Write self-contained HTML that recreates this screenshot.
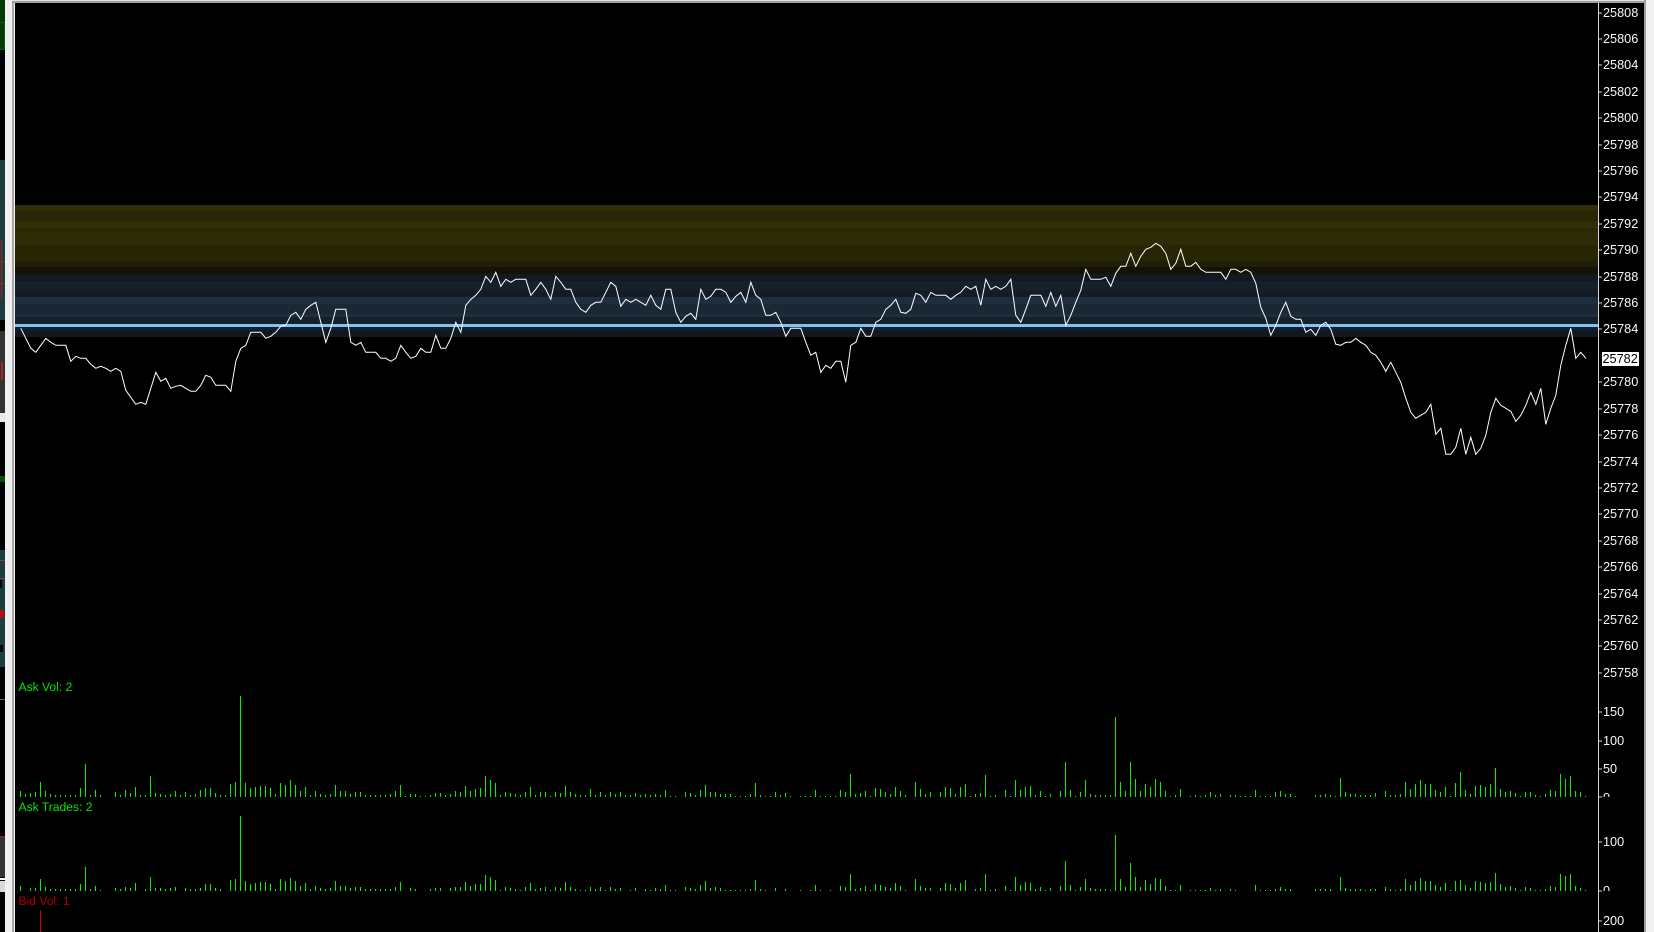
<!DOCTYPE html>
<html><head><meta charset="utf-8"><title>Chart</title>
<style>
html,body{margin:0;padding:0;background:#000;width:1654px;height:932px;overflow:hidden}
svg{display:block;position:absolute;left:0;top:0}
text{font-family:"Liberation Sans",Arial,sans-serif;font-size:12.7px}
text.l{font-size:12.1px}
</style></head><body>
<svg width="1654" height="932" viewBox="0 0 1654 932" xmlns="http://www.w3.org/2000/svg">
<rect width="1654" height="932" fill="#000"/>
<!-- left strip -->
<g shape-rendering="crispEdges">
<rect x="0" y="0" width="5" height="22" fill="#063a06"/>
<rect x="0" y="22" width="5" height="28" fill="#0a5a0a"/>
<rect x="0" y="23" width="4" height="26" fill="#063a06"/>
<rect x="0" y="160" width="5" height="160" fill="#1c3c3e"/>
<rect x="1" y="240" width="1" height="58" fill="#a02020"/>
<rect x="0" y="261" width="5" height="1" fill="#a02020"/>
<rect x="0" y="283" width="5" height="1" fill="#a02020"/>
<rect x="0" y="331" width="5" height="82" fill="#333"/>
<rect x="1" y="362" width="2" height="18" fill="#a02828"/>
<rect x="0" y="413" width="5" height="9" fill="#e8e8e8"/>
<rect x="0" y="476" width="5" height="6" fill="#0a4a0a"/>
<rect x="0" y="550" width="5" height="117" fill="#1c3c3e"/>
<rect x="0" y="560" width="5" height="1" fill="#804040"/>
<rect x="0" y="578" width="5" height="1" fill="#804040"/>
<rect x="0" y="580" width="2" height="8" fill="#000"/>
<rect x="0" y="610" width="4" height="8" fill="#b01010"/>
<rect x="0" y="645" width="3" height="7" fill="#000"/>
<rect x="0" y="699" width="5" height="1" fill="#666"/>
<rect x="0" y="836" width="5" height="2" fill="#802020"/>
<rect x="0" y="838" width="5" height="39" fill="#333"/>
<rect x="0" y="878" width="5" height="2" fill="#fff"/>
<rect x="0" y="881" width="5" height="11" fill="#d8d8d8"/>
<rect x="5" y="0" width="7" height="932" fill="#f0f0f0"/>
<rect x="12" y="0" width="2" height="932" fill="#a8a8a8"/>
<rect x="14" y="0" width="1" height="932" fill="#f0f0f0"/>
<rect x="12" y="0" width="1642" height="1" fill="#e0e0e0"/>
<rect x="12" y="1" width="1642" height="2" fill="#a0a0a0"/>
<rect x="1644" y="0" width="2" height="932" fill="#a0a0a0"/>
<rect x="1646" y="0" width="8" height="932" fill="#f0f0f0"/>
<!-- bands -->
<rect x="15" y="205" width="1583" height="6" fill="#312d04"/>
<rect x="15" y="211" width="1583" height="10" fill="#282604"/>
<rect x="15" y="221" width="1583" height="7" fill="#312d05"/>
<rect x="15" y="228" width="1583" height="4" fill="#2a2704"/>
<rect x="15" y="232" width="1583" height="9" fill="#2d2a05"/>
<rect x="15" y="241" width="1583" height="4" fill="#312c05"/>
<rect x="15" y="245" width="1583" height="16" fill="#282504"/>
<rect x="15" y="261" width="1583" height="6" fill="#201e04"/>
<rect x="15" y="267" width="1583" height="7" fill="#131204"/>
<rect x="15" y="274" width="1583" height="7" fill="#111a22"/>
<rect x="15" y="281" width="1583" height="10" fill="#15202a"/>
<rect x="15" y="291" width="1583" height="6" fill="#131c24"/>
<rect x="15" y="297" width="1583" height="7" fill="#1f2e3e"/>
<rect x="15" y="304" width="1583" height="10" fill="#1a2836"/>
<rect x="15" y="314" width="1583" height="3" fill="#1f2e3e"/>
<rect x="15" y="317" width="1583" height="7" fill="#15202a"/>
<rect x="15" y="324" width="1583" height="3" fill="#80c0ff"/>
<rect x="15" y="327" width="1583" height="3" fill="#15202a"/>
<rect x="15" y="330" width="1583" height="7" fill="#101920"/>
</g>
<!-- price line -->
<polyline transform="translate(.8 .3)" fill="none" stroke="#fff" stroke-width="1" points="20,328 25,338 30,348 35,352 40,345 45,338 50,342 55,345 60,345 65,345 70,361 75,356 80,358 85,358 90,364 95,368 100,366 105,368 110,371 115,368 120,371 125,390 130,397 135,404 140,402 145,404 150,388 155,372 160,381 165,378 170,388 175,386 180,385 185,388 190,391 195,391 200,385 205,375 210,377 215,385 220,385 225,385 230,391 235,361 240,348 245,345 250,332 255,332 260,332 265,338 270,336 275,332 280,326 285,325 290,315 295,312 300,319 305,309 310,305 315,302 320,322 325,342 330,328 335,309 340,309 345,309 350,342 355,345 360,342 365,352 370,352 375,352 380,358 385,358 390,361 395,358 400,345 405,352 410,358 415,356 420,348 425,352 430,352 435,335 440,348 445,348 450,338 455,322 460,332 465,305 470,299 475,295 480,289 485,276 490,282 495,272 500,286 505,279 510,282 515,279 520,279 525,279 530,295 535,289 540,282 545,289 550,299 555,276 560,282 565,289 570,289 575,302 580,309 585,312 590,305 595,302 600,302 605,292 610,282 615,286 620,306 625,299 630,302 635,299 640,302 645,305 650,295 655,305 660,309 665,289 670,289 675,312 680,322 685,316 690,313 695,319 700,289 705,299 710,296 715,289 720,289 725,292 730,302 735,296 740,292 745,302 750,282 755,295 760,299 765,315 770,315 775,312 780,322 785,336 790,328 795,328 800,328 805,342 810,355 815,352 820,372 825,365 830,368 835,361 840,361 845,382 850,345 855,342 860,328 865,336 870,336 875,322 880,319 885,309 890,305 895,299 900,312 905,313 910,309 915,293 920,295 925,302 930,292 935,295 940,295 945,295 950,299 955,295 960,292 965,286 970,289 975,286 980,305 985,279 990,289 995,286 1000,289 1005,286 1010,279 1015,315 1020,322 1025,309 1030,295 1035,295 1040,295 1045,306 1050,292 1055,306 1060,295 1065,325 1070,315 1075,302 1080,290 1085,269 1090,279 1095,279 1100,279 1105,277 1110,286 1115,273 1120,266 1125,266 1130,253 1135,266 1140,256 1145,249 1150,247 1155,243 1160,246 1165,253 1170,269 1175,263 1180,249 1185,266 1190,266 1195,262 1200,269 1205,272 1210,272 1215,272 1220,272 1225,279 1230,269 1235,269 1240,272 1245,269 1250,272 1255,283 1260,307 1265,318 1270,335 1275,325 1280,312 1285,302 1290,316 1295,319 1300,319 1305,332 1310,329 1315,335 1320,325 1325,322 1330,329 1335,344 1340,345 1345,342 1350,342 1355,338 1360,342 1365,345 1370,352 1375,355 1380,362 1385,371 1390,362 1395,372 1400,382 1405,398 1410,412 1415,418 1420,415 1425,412 1430,404 1435,434 1440,428 1445,454 1450,454 1455,447 1460,428 1465,454 1470,437 1475,454 1480,448 1485,435 1490,412 1495,398 1500,405 1505,408 1510,411 1515,421 1520,415 1525,405 1530,392 1535,404 1540,388 1545,424 1550,408 1555,395 1560,365 1565,345 1570,328 1575,358 1580,352 1585,358"/>
<!-- ask volume bars -->
<g transform="translate(.5 797)" stroke="#00f400" stroke-width="1" fill="none" shape-rendering="crispEdges">
<path d="M20 0v-6M25 0v-3M30 0v-4M35 0v-5M40 0v-15M45 0v-6M50 0v-3M55 0v-2M60 0v-2M65 0v-2M70 0v-2M75 0v-2M80 0v-9M85 0v-33M90 0v-2M95 0v-7M100 0v-2M115 0v-5M120 0v-2M125 0v-7M130 0v-4M135 0v-10M140 0v-2M145 0v-2M150 0v-21M155 0v-4M160 0v-3M165 0v-2M170 0v-3M175 0v-6M180 0v-2M185 0v-5M190 0v-2M195 0v-3M200 0v-7M205 0v-9M210 0v-9M215 0v-4M220 0v-2M225 0v-2M230 0v-13M235 0v-15M240 0v-101M245 0v-14M250 0v-9M255 0v-10M260 0v-11M265 0v-11M270 0v-9M275 0v-3M280 0v-14M285 0v-12M290 0v-17M295 0v-12M300 0v-6M305 0v-10M310 0v-2M315 0v-6M320 0v-3M325 0v-2M330 0v-3M335 0v-12M340 0v-6M345 0v-6M350 0v-3M355 0v-5M360 0v-5M365 0v-2M370 0v-2M375 0v-2M380 0v-2M385 0v-2M390 0v-3M395 0v-6M400 0v-12M405 0v-1M410 0v-3M415 0v-3M420 0v-1M425 0v-1M430 0v-2M435 0v-4M440 0v-4M445 0v-2M450 0v-3M455 0v-6M460 0v-5M465 0v-11M470 0v-6M475 0v-8M480 0v-9M485 0v-21M490 0v-17M495 0v-14M500 0v-2M505 0v-5M510 0v-4M515 0v-3M520 0v-2M525 0v-5M530 0v-10M535 0v-2M540 0v-5M545 0v-5M550 0v-1M555 0v-5M560 0v-4M565 0v-11M570 0v-5M575 0v-3M580 0v-2M585 0v-2M590 0v-8M595 0v-2M600 0v-5M605 0v-2M610 0v-5M615 0v-3M620 0v-5M625 0v-2M630 0v-2M635 0v-4M640 0v-2M645 0v-3M650 0v-2M655 0v-3M660 0v-2M665 0v-7M670 0v-1M675 0v-1M685 0v-5M690 0v-4M695 0v-2M700 0v-7M705 0v-12M710 0v-5M715 0v-5M720 0v-3M725 0v-3M730 0v-3M735 0v-1M740 0v-1M745 0v-1M750 0v-3M755 0v-14M760 0v-2M765 0v-1M770 0v-1M775 0v-5M780 0v-2M785 0v-4M790 0v-1M800 0v-1M805 0v-1M810 0v-1M815 0v-7M820 0v-1M825 0v-1M830 0v-1M835 0v-1M840 0v-7M845 0v-5M850 0v-23M855 0v-3M860 0v-4M865 0v-6M870 0v-1M875 0v-9M880 0v-8M885 0v-5M890 0v-3M895 0v-10M900 0v-6M905 0v-2M915 0v-15M920 0v-8M925 0v-3M930 0v-5M940 0v-5M945 0v-10M950 0v-9M955 0v-3M960 0v-10M965 0v-13M970 0v-1M975 0v-3M980 0v-4M985 0v-22M990 0v-1M995 0v-2M1005 0v-7M1010 0v-1M1015 0v-17M1020 0v-7M1025 0v-10M1030 0v-11M1035 0v-2M1040 0v-6M1045 0v-1M1050 0v-3M1060 0v-6M1065 0v-35M1070 0v-7M1075 0v-1M1080 0v-5M1085 0v-17M1090 0v-3M1095 0v-2M1100 0v-2M1105 0v-2M1110 0v-2M1115 0v-80M1120 0v-15M1125 0v-6M1130 0v-35M1135 0v-18M1140 0v-6M1145 0v-13M1150 0v-10M1155 0v-18M1160 0v-15M1165 0v-6M1170 0v-1M1175 0v-2M1180 0v-8M1190 0v-1M1195 0v-2M1200 0v-1M1205 0v-2M1210 0v-5M1215 0v-2M1220 0v-3M1230 0v-2M1235 0v-2M1240 0v-1M1245 0v-1M1250 0v-1M1255 0v-7M1260 0v-1M1265 0v-1M1270 0v-1M1275 0v-5M1280 0v-6M1285 0v-3M1290 0v-3M1295 0v-1M1315 0v-2M1320 0v-2M1325 0v-3M1330 0v-2M1335 0v-1M1340 0v-19M1345 0v-5M1350 0v-3M1355 0v-3M1360 0v-2M1365 0v-2M1370 0v-2M1375 0v-4M1385 0v-6M1390 0v-2M1395 0v-2M1400 0v-3M1405 0v-15M1410 0v-8M1415 0v-13M1420 0v-17M1425 0v-13M1430 0v-13M1435 0v-7M1440 0v-5M1445 0v-10M1450 0v-1M1455 0v-14M1460 0v-25M1465 0v-7M1470 0v-3M1475 0v-11M1480 0v-12M1485 0v-10M1490 0v-13M1495 0v-29M1500 0v-8M1505 0v-5M1510 0v-6M1515 0v-4M1520 0v-1M1525 0v-5M1530 0v-5M1535 0v-2M1540 0v-1M1545 0v-3M1550 0v-7M1555 0v-6M1560 0v-23M1565 0v-18M1570 0v-21M1575 0v-6M1580 0v-5M1585 0v-1"/>
</g>
<!-- ask trades bars -->
<g transform="translate(.5 891)" stroke="#00f400" stroke-width="1" fill="none" shape-rendering="crispEdges">
<path d="M20 0v-5M30 0v-3M35 0v-3M40 0v-12M45 0v-4M50 0v-2M55 0v-2M60 0v-2M65 0v-2M70 0v-2M75 0v-2M80 0v-7M85 0v-24M90 0v-2M95 0v-5M100 0v-1M115 0v-3M120 0v-2M125 0v-4M130 0v-3M135 0v-8M145 0v-2M150 0v-14M155 0v-3M160 0v-3M165 0v-2M170 0v-3M175 0v-4M185 0v-3M190 0v-2M195 0v-2M200 0v-3M205 0v-7M210 0v-7M215 0v-3M220 0v-2M230 0v-11M235 0v-12M240 0v-75M245 0v-10M250 0v-7M255 0v-8M260 0v-9M265 0v-9M270 0v-7M275 0v-2M280 0v-12M285 0v-10M290 0v-13M295 0v-10M300 0v-5M305 0v-8M310 0v-2M315 0v-5M320 0v-3M325 0v-2M330 0v-3M335 0v-10M340 0v-5M345 0v-5M350 0v-3M355 0v-4M360 0v-4M365 0v-2M370 0v-2M375 0v-2M380 0v-2M385 0v-2M390 0v-2M395 0v-4M400 0v-9M410 0v-3M415 0v-2M430 0v-2M435 0v-3M440 0v-3M450 0v-3M455 0v-4M460 0v-4M465 0v-9M470 0v-5M475 0v-7M480 0v-7M485 0v-16M490 0v-14M495 0v-11M500 0v-1M505 0v-4M510 0v-3M515 0v-2M520 0v-1M525 0v-4M530 0v-8M535 0v-2M540 0v-3M545 0v-4M550 0v-1M555 0v-4M560 0v-3M565 0v-9M570 0v-4M575 0v-2M580 0v-1M585 0v-1M590 0v-4M595 0v-2M600 0v-4M605 0v-1M610 0v-4M615 0v-2M620 0v-3M630 0v-1M635 0v-3M645 0v-2M650 0v-1M655 0v-3M660 0v-2M665 0v-6M670 0v-1M675 0v-1M685 0v-4M690 0v-3M695 0v-2M700 0v-6M705 0v-10M710 0v-3M715 0v-4M720 0v-3M725 0v-1M730 0v-1M735 0v-1M740 0v-1M745 0v-1M750 0v-2M755 0v-11M760 0v-2M765 0v-1M775 0v-3M785 0v-2M800 0v-1M810 0v-1M815 0v-6M820 0v-1M830 0v-1M840 0v-5M845 0v-4M850 0v-17M855 0v-2M860 0v-3M865 0v-5M870 0v-1M875 0v-7M880 0v-6M885 0v-4M890 0v-3M895 0v-8M900 0v-5M905 0v-1M915 0v-12M920 0v-5M925 0v-3M930 0v-3M940 0v-3M945 0v-8M950 0v-7M955 0v-3M960 0v-8M965 0v-11M975 0v-2M980 0v-3M985 0v-17M990 0v-1M995 0v-2M1005 0v-5M1010 0v-1M1015 0v-14M1020 0v-6M1025 0v-9M1030 0v-8M1035 0v-2M1040 0v-4M1045 0v-1M1050 0v-3M1060 0v-5M1065 0v-30M1070 0v-6M1075 0v-1M1080 0v-4M1085 0v-12M1090 0v-3M1095 0v-2M1100 0v-2M1105 0v-2M1110 0v-1M1115 0v-56M1120 0v-12M1125 0v-4M1130 0v-28M1135 0v-14M1140 0v-4M1145 0v-11M1150 0v-7M1155 0v-13M1160 0v-12M1165 0v-5M1170 0v-1M1175 0v-1M1180 0v-6M1190 0v-1M1195 0v-1M1200 0v-1M1205 0v-1M1210 0v-3M1215 0v-1M1220 0v-2M1230 0v-2M1235 0v-1M1255 0v-6M1260 0v-1M1265 0v-1M1270 0v-1M1275 0v-2M1280 0v-4M1285 0v-2M1290 0v-2M1315 0v-2M1320 0v-2M1325 0v-2M1330 0v-2M1340 0v-14M1345 0v-3M1350 0v-2M1355 0v-2M1360 0v-2M1365 0v-1M1370 0v-2M1375 0v-2M1385 0v-4M1390 0v-2M1395 0v-1M1400 0v-2M1405 0v-12M1410 0v-6M1415 0v-10M1420 0v-13M1425 0v-10M1430 0v-10M1435 0v-6M1440 0v-4M1445 0v-8M1450 0v-1M1455 0v-10M1460 0v-11M1465 0v-6M1470 0v-3M1475 0v-10M1480 0v-9M1485 0v-8M1490 0v-9M1495 0v-18M1500 0v-7M1505 0v-4M1510 0v-5M1515 0v-3M1520 0v-1M1525 0v-4M1530 0v-3M1535 0v-1M1540 0v-1M1545 0v-2M1550 0v-5M1555 0v-4M1560 0v-17M1565 0v-15M1570 0v-17M1575 0v-5M1580 0v-3M1585 0v-1"/>
</g>
<path d="M40.5 910V932" stroke="#d00000" stroke-width="1" shape-rendering="crispEdges"/>
<!-- indicator labels -->
<text class="l" x="18.5" y="691" fill="#00e800">Ask Vol: 2</text>
<text class="l" x="18.5" y="811" fill="#00e800">Ask Trades: 2</text>
<text class="l" x="18.5" y="905" fill="#b00000">Bid Vol: 1</text>
<!-- axis -->
<g shape-rendering="crispEdges" fill="none" stroke="#d8d8d8" stroke-width="1">
<path d="M1598.5 3V932"/>
<path d="M1599 13h3M1599 39h3M1599 65h3M1599 92h3M1599 118h3M1599 145h3M1599 171h3M1599 197h3M1599 224h3M1599 250h3M1599 277h3M1599 303h3M1599 329h3M1599 382h3M1599 409h3M1599 435h3M1599 462h3M1599 488h3M1599 514h3M1599 541h3M1599 567h3M1599 594h3M1599 620h3M1599 646h3M1599 673h3M1599 712h3M1599 741h3M1599 769h3M1599 797h3M1599 842h3M1599 891h3M1599 921h3"/>
</g>
<g fill="#f4f8ff">
<text x="1603" y="17">25808</text>
<text x="1603" y="43">25806</text>
<text x="1603" y="69">25804</text>
<text x="1603" y="96">25802</text>
<text x="1603" y="122">25800</text>
<text x="1603" y="149">25798</text>
<text x="1603" y="175">25796</text>
<text x="1603" y="201">25794</text>
<text x="1603" y="228">25792</text>
<text x="1603" y="254">25790</text>
<text x="1603" y="281">25788</text>
<text x="1603" y="307">25786</text>
<text x="1603" y="333">25784</text>
<text x="1603" y="386">25780</text>
<text x="1603" y="413">25778</text>
<text x="1603" y="439">25776</text>
<text x="1603" y="466">25774</text>
<text x="1603" y="492">25772</text>
<text x="1603" y="518">25770</text>
<text x="1603" y="545">25768</text>
<text x="1603" y="571">25766</text>
<text x="1603" y="598">25764</text>
<text x="1603" y="624">25762</text>
<text x="1603" y="650">25760</text>
<text x="1603" y="677">25758</text>
<text x="1603" y="716">150</text>
<text x="1603" y="745">100</text>
<text x="1603" y="773">50</text>
<text x="1603" y="802">0</text>
<text x="1603" y="846">100</text>
<text x="1603" y="895">0</text>
<text x="1603" y="925">200</text>
</g>
<rect x="1602" y="797" width="30" height="8" fill="#000"/>
<rect x="1602" y="891" width="30" height="8" fill="#000"/>
<rect x="1602" y="352" width="37" height="14" fill="#fff"/>
<text x="1602.5" y="363" fill="#000">25782</text>
</svg>
</body></html>
